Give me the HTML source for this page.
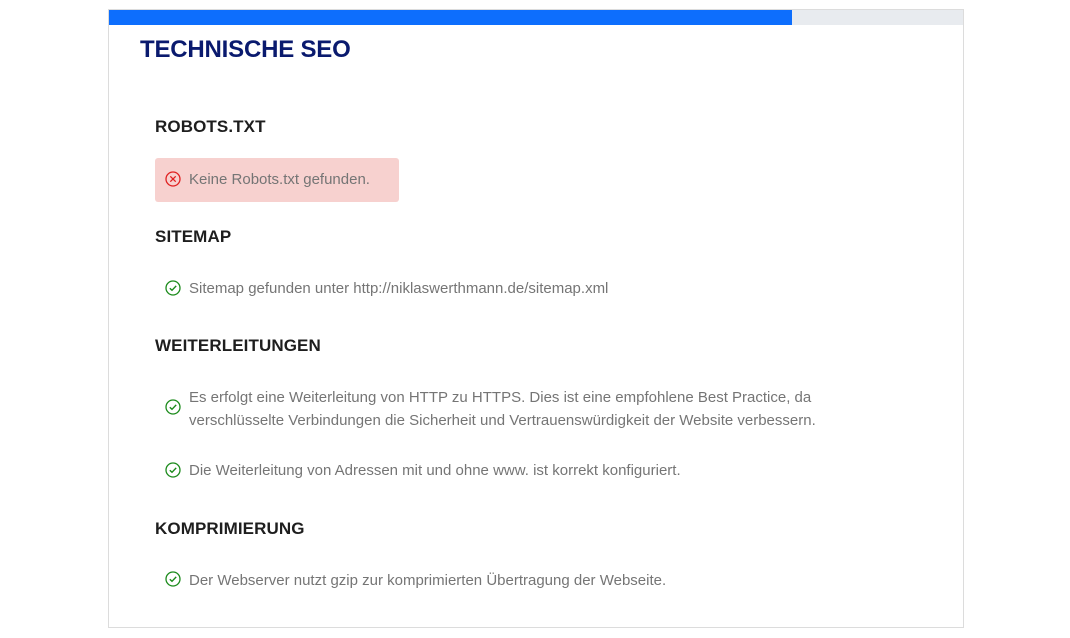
<!DOCTYPE html>
<html><head><meta charset="utf-8"><style>
body{margin:0;background:#fff;font-family:"Liberation Sans",sans-serif;width:1070px;height:638px;overflow:hidden}
.card{position:absolute;left:108px;top:9px;width:854px;height:617px;border:1px solid #dcdcdc}
.bar{position:absolute;left:0;top:0;width:854px;height:15px;background:#e8ebef}
.bar i{position:absolute;left:0;top:0;width:683px;height:15px;background:#0d6efd}
h1{position:absolute;left:31px;top:26px;margin:0;font-size:24px;font-weight:900;color:#0a1a6e;letter-spacing:-0.2px}
h2{position:absolute;left:46px;margin:0;font-size:17px;font-weight:700;color:#1e1e1e;letter-spacing:0.1px}
.t{position:absolute;left:80px;font-size:15px;color:#757575;line-height:23px}
.ic{position:absolute;left:56px;width:16px;height:16px}
.err{position:absolute;left:46px;top:148px;width:244px;height:44px;background:#f7d1cf;border-radius:3px}
</style></head><body>
<div class="card">
<div class="bar"><i></i></div>
<h1>TECHNISCHE SEO</h1>
<h2 style="top:107px">ROBOTS.TXT</h2>
<div class="err"></div>
<svg class="ic" style="top:161px" viewBox="0 0 16 16"><circle cx="8" cy="8" r="7" fill="none" stroke="#e02020" stroke-width="1.3"/><path d="M5.3 5.3L10.7 10.7M10.7 5.3L5.3 10.7" stroke="#e02020" stroke-width="1.3"/></svg>
<div class="t" style="top:158px">Keine Robots.txt gefunden.</div>
<h2 style="top:217px">SITEMAP</h2>
<svg class="ic" style="top:270px" viewBox="0 0 16 16"><circle cx="8" cy="8" r="7" fill="none" stroke="#1a8a1a" stroke-width="1.3"/><path d="M4.8 8.2L7 10.3L11.2 5.9" fill="none" stroke="#1a8a1a" stroke-width="1.4"/></svg>
<div class="t" style="top:267px">Sitemap gefunden unter http://niklaswerthmann.de/sitemap.xml</div>
<h2 style="top:326px">WEITERLEITUNGEN</h2>
<svg class="ic" style="top:389px" viewBox="0 0 16 16"><circle cx="8" cy="8" r="7" fill="none" stroke="#1a8a1a" stroke-width="1.3"/><path d="M4.8 8.2L7 10.3L11.2 5.9" fill="none" stroke="#1a8a1a" stroke-width="1.4"/></svg>
<div class="t" style="top:376px">Es erfolgt eine Weiterleitung von HTTP zu HTTPS. Dies ist eine empfohlene Best Practice, da<br>verschlüsselte Verbindungen die Sicherheit und Vertrauenswürdigkeit der Website verbessern.</div>
<svg class="ic" style="top:452px" viewBox="0 0 16 16"><circle cx="8" cy="8" r="7" fill="none" stroke="#1a8a1a" stroke-width="1.3"/><path d="M4.8 8.2L7 10.3L11.2 5.9" fill="none" stroke="#1a8a1a" stroke-width="1.4"/></svg>
<div class="t" style="top:449px">Die Weiterleitung von Adressen mit und ohne www. ist korrekt konfiguriert.</div>
<h2 style="top:509px">KOMPRIMIERUNG</h2>
<svg class="ic" style="top:561px" viewBox="0 0 16 16"><circle cx="8" cy="8" r="7" fill="none" stroke="#1a8a1a" stroke-width="1.3"/><path d="M4.8 8.2L7 10.3L11.2 5.9" fill="none" stroke="#1a8a1a" stroke-width="1.4"/></svg>
<div class="t" style="top:559px">Der Webserver nutzt gzip zur komprimierten Übertragung der Webseite.</div>
</div>
</body></html>
